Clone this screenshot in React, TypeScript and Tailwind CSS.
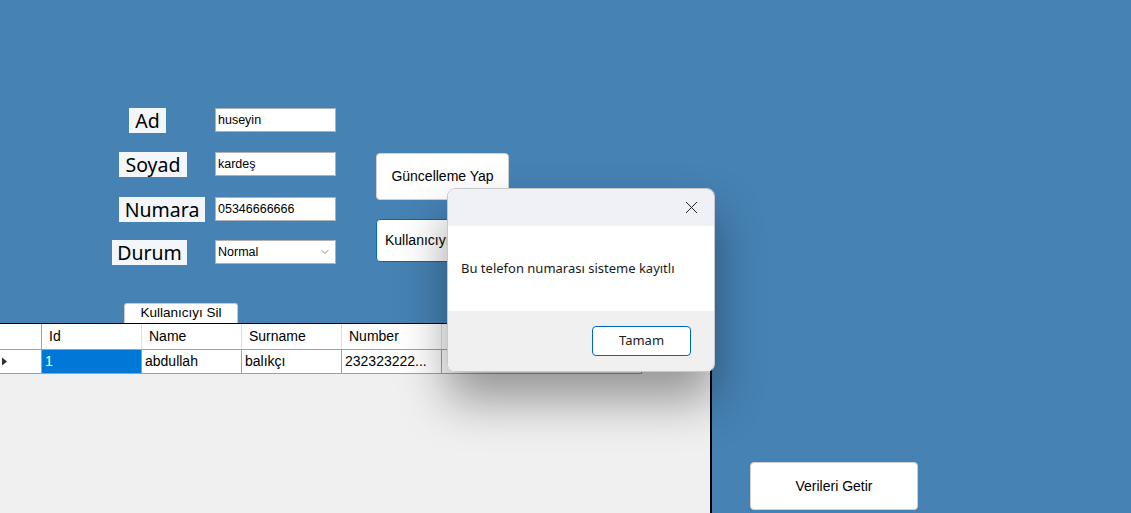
import { ChevronDown, X } from "lucide-react";

// Labels on the form (left offset, width of the row label area)
type TField = {
  label: string;
  value: string;
  ml: string;
  mt: string;
  select?: boolean;
};

const fields: TField[] = [
  { label: "Ad", value: "huseyin", ml: "ml-[129px] w-[37px]", mt: "mt-[108px]" },
  { label: "Soyad", value: "kardeş", ml: "ml-[119px] w-[68px]", mt: "mt-[19px]" },
  { label: "Numara", value: "05346666666", ml: "ml-[119px] w-[86px]", mt: "mt-[20px]" },
  { label: "Durum", value: "Normal", ml: "ml-[112px] w-[75px]", mt: "mt-[18px]", select: true },
];

const columns = ["Id", "Name", "Surname", "Number", ""];
const row = ["1", "abdullah", "balıkçı", "232323222...", ""];

export default function App() {
  return (
    <div
      className="relative w-[1131px] h-[513px] overflow-hidden bg-[#4682b4] flex flex-col text-black"
      style={{ fontFamily: '"Liberation Sans", Arial, sans-serif' }}
    >
      {/* top part of the form */}
      <div className="h-[323px] flex items-start shrink-0">
        <div className="w-[376px] h-full flex flex-col">
          {fields.map((f) => (
            <div key={f.label} className={`flex items-start h-[25px] ${f.mt}`}>
              <div className="w-[215px] flex">
                <div
                  className={`${f.ml} h-[25px] bg-[#f3f7fc] flex items-center justify-center text-[19.5px] leading-none`}
                  style={{ fontFamily: '"Noto Sans", "Open Sans", sans-serif' }}
                >
                  {f.label}
                </div>
              </div>
              <div className="w-[121px] h-[24px] bg-white border border-[#aeb2b8] flex items-center px-[2px] text-[12.5px]">
                <span className="flex-1">{f.value}</span>
                {f.select && <ChevronDown size={12} strokeWidth={1.5} className="text-[#606060] mr-[2px]" />}
              </div>
            </div>
          ))}
          <div className="mt-auto ml-[124px] w-[114px] h-[20px] bg-white rounded-t-[3px] border border-[#c9c9c9] border-b-0 flex items-center justify-center text-[13.5px]">
            Kullanıcıyı Sil
          </div>
        </div>
        <div className="flex flex-col pt-[153px] gap-[19px]">
          <div className="w-[133px] h-[47px] bg-white rounded-[4px] border border-[#d0d0d0] flex items-center justify-center text-[14px]">
            Güncelleme Yap
          </div>
          <div className="w-[133px] h-[43px] bg-white rounded-[4px] border border-[#0067c0] flex items-center pl-[8px] text-[14px] whitespace-nowrap overflow-hidden">
            Kullanıcıyı Güncelle
          </div>
        </div>
      </div>

      {/* bottom part: data grid and button */}
      <div className="flex flex-1">
        <div className="w-[712px] h-full bg-[#f0f0f0] border-t border-black border-r-2 flex flex-col">
          <div className="flex w-[642px] h-[26px] bg-white border-b border-[#a0a0a0] text-[14px]">
            <div className="w-[42px] border-r border-[#a0a0a0]" />
            {columns.map((c, i) => (
              <div
                key={i}
                className={`${i === 4 ? "w-[200px]" : "w-[100px]"} border-r border-[#e0e0e0] flex items-center pl-[7px]`}
              >
                {c}
              </div>
            ))}
          </div>
          <div className="flex w-[642px] h-[24px] bg-white border-b border-[#a0a0a0] text-[14px]">
            <div className="w-[42px] border-r border-[#a0a0a0] flex items-center pl-[1px]">
              <svg width="7" height="9" viewBox="0 0 7 9">
                <path d="M1 0.5 L6 4.5 L1 8.5 Z" fill="#303030" />
              </svg>
            </div>
            {row.map((c, i) => (
              <div
                key={i}
                className={`${i === 4 ? "w-[200px]" : "w-[100px]"} border-r border-[#a0a0a0] flex items-center pl-[3px] ${
                  i === 0 ? "bg-[#0078d7] text-white" : ""
                }`}
              >
                {c}
              </div>
            ))}
          </div>
        </div>
        <div className="pl-[38px] pt-[139px]">
          <div className="w-[168px] h-[48px] bg-white rounded-[4px] border border-[#d0d0d0] flex items-center justify-center text-[14px]">
            Verileri Getir
          </div>
        </div>
      </div>

      {/* message box */}
      <div
        className="absolute left-[447px] top-[188px] w-[268px] h-[184px] rounded-[8px] overflow-hidden border border-[#c8c8c8] flex flex-col shadow-[0_28px_48px_rgba(0,0,0,0.38)]"
        style={{ fontFamily: '"Noto Sans", "Open Sans", sans-serif' }}
      >
        <div className="h-[37px] bg-[#f0f1f6] flex items-center justify-end pr-[12px]">
          <X size={21} strokeWidth={1.1} className="text-[#1a1a1a]" />
        </div>
        <div className="h-[85px] bg-white flex items-center pl-[13px] text-[13px] text-[#1a1a1a]">
          Bu telefon numarası sisteme kayıtlı
        </div>
        <div className="flex-1 bg-[#f0f0f0] flex justify-end pt-[15px] pr-[23px]">
          <div className="w-[99px] h-[30px] bg-white rounded-[4px] border border-[#0067c0] flex items-center justify-center text-[13px] text-[#1a1a1a]">
            Tamam
          </div>
        </div>
      </div>
    </div>
  );
}
